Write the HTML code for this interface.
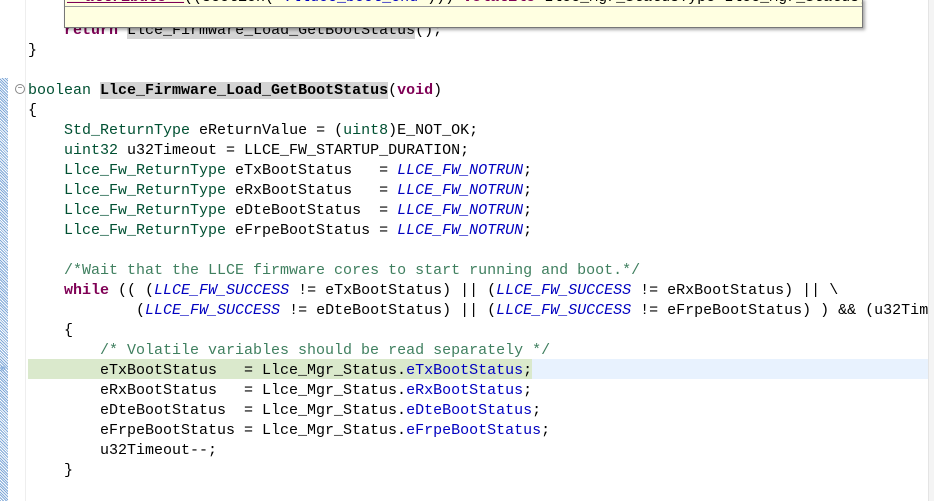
<!DOCTYPE html>
<html><head><meta charset="utf-8"><style>
html,body{margin:0;width:934px;height:501px;overflow:hidden;}
body{background:#fff;position:relative;font-family:"Liberation Mono",monospace;font-size:15px;}
.hatch{position:absolute;left:0;top:78px;width:8px;height:423px;background:repeating-linear-gradient(45deg,#7fa8d8 0 1px,#fff 1px 2px);}
.gut{position:absolute;left:25px;top:0;width:1px;height:501px;background:#eee;}
.right{position:absolute;left:928px;top:0;width:6px;height:501px;background:#f4f4f4;border-left:1px solid #e4e4e4;z-index:5;}
.code{position:absolute;left:28px;top:21px;line-height:20px;color:#000;}
.l{height:20px;white-space:pre;}
.t{color:#005032}.k{color:#7f0055;font-weight:bold}.c{color:#3f7f5f}.e{color:#0000c0;font-style:italic}.f{color:#0000c0}
.hl{background:#d4d4d4}
.cur{position:absolute;left:28px;top:359px;width:900px;height:20px;background:#e8f2fe;}
.curg{position:absolute;left:28px;top:359px;width:504px;height:20px;background:#dae9cc;}
.pop{position:absolute;left:64px;top:-2px;width:797px;height:28px;background:#ffffe1;border:1px solid #777;box-shadow:2px 2px 3px rgba(0,0,0,.35);overflow:hidden;z-index:6;}
.pop .sep{position:absolute;left:0;top:7px;width:100%;height:1px;background:#999;}
.pop .tx{position:absolute;left:2px;top:-11px;white-space:pre;line-height:20px;}
.fold{position:absolute;left:15px;top:84px;width:8px;height:8px;border:1px solid #888;border-radius:50%;font-size:8px;line-height:8px;text-align:center;color:#555;}
</style></head><body>
<div class="hatch"></div><div class="gut"></div><div class="right"></div>
<div class="cur"></div><div class="curg"></div>
<div class="fold">−</div>
<div style="position:absolute;left:0;top:364px;color:#7fa8d8;font-size:10px">»</div>
<div class="code"><div class="l">    <span class="k">return</span> <span class="hl">Llce_Firmware_Load_GetBootStatus</span>();</div><div class="l">}</div><div class="l"> </div><div class="l"><span class="t">boolean</span> <b class="hl">Llce_Firmware_Load_GetBootStatus</b>(<span class="k">void</span>)</div><div class="l">{</div><div class="l">    <span class="t">Std_ReturnType</span> eReturnValue = (<span class="t">uint8</span>)E_NOT_OK;</div><div class="l">    <span class="t">uint32</span> u32Timeout = LLCE_FW_STARTUP_DURATION;</div><div class="l">    <span class="t">Llce_Fw_ReturnType</span> eTxBootStatus   = <span class="e">LLCE_FW_NOTRUN</span>;</div><div class="l">    <span class="t">Llce_Fw_ReturnType</span> eRxBootStatus   = <span class="e">LLCE_FW_NOTRUN</span>;</div><div class="l">    <span class="t">Llce_Fw_ReturnType</span> eDteBootStatus  = <span class="e">LLCE_FW_NOTRUN</span>;</div><div class="l">    <span class="t">Llce_Fw_ReturnType</span> eFrpeBootStatus = <span class="e">LLCE_FW_NOTRUN</span>;</div><div class="l"> </div><div class="l">    <span class="c">/*Wait that the LLCE firmware cores to start running and boot.*/</span></div><div class="l">    <span class="k">while</span> (( (<span class="e">LLCE_FW_SUCCESS</span> != eTxBootStatus) || (<span class="e">LLCE_FW_SUCCESS</span> != eRxBootStatus) || \</div><div class="l">            (<span class="e">LLCE_FW_SUCCESS</span> != eDteBootStatus) || (<span class="e">LLCE_FW_SUCCESS</span> != eFrpeBootStatus) ) &amp;&amp; (u32Timeout</div><div class="l">    {</div><div class="l">        <span class="c">/* Volatile variables should be read separately */</span></div><div class="l">        eTxBootStatus   = Llce_Mgr_Status.<span class="f">eTxBootStatus</span>;</div><div class="l">        eRxBootStatus   = Llce_Mgr_Status.<span class="f">eRxBootStatus</span>;</div><div class="l">        eDteBootStatus  = Llce_Mgr_Status.<span class="f">eDteBootStatus</span>;</div><div class="l">        eFrpeBootStatus = Llce_Mgr_Status.<span class="f">eFrpeBootStatus</span>;</div><div class="l">        u32Timeout--;</div><div class="l">    }</div></div>
<div class="pop"><div class="tx"><span class="k" style="text-decoration:underline">__attribute__</span>((section(<span class="f">".lldce_boot_end"</span>))) <span class="k">volatile</span> Llce_Mgr_StatusType Llce_Mgr_Status;</div><div class="sep"></div></div>
</body></html>
